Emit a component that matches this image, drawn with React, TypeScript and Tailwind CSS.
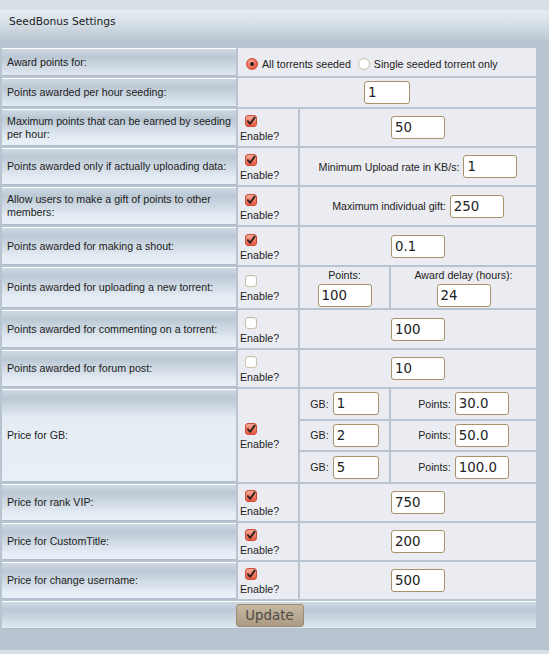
import React from "react";

const sans = "font-['Liberation_Sans',Arial,sans-serif]";
const dejavu = "font-['DejaVu_Sans',Verdana,sans-serif]";

const labelCls =
  "flex items-center pl-[5px] pr-[2px] border-t border-t-white border-b border-b-[#aebdcb] bg-[linear-gradient(to_bottom,#cfd9e3_0px,#bbc8d4_8px,#e4ecf4_28px,#e8eff7_100%)] text-[10.67px] leading-[13px] text-[#222]";

const cellCls = "bg-[#ebecf1]";

function Check({ checked }: { checked: boolean }) {
  if (checked) {
    return (
      <span className="ml-[5px] block w-[12px] h-[12px] rounded-[3px] border border-[#cc4d39] bg-[linear-gradient(to_bottom,#f8a897,#e9583f)] relative">
        <svg
          width="12"
          height="12"
          viewBox="0 0 12 12"
          className="absolute left-[-1px] top-[-1px]"
        >
          <path
            d="M2.8 6.2 L5.2 8.8 L9.6 2.6"
            fill="none"
            stroke="#2a2220"
            strokeWidth="1.9"
            strokeLinecap="round"
            strokeLinejoin="round"
          />
        </svg>
      </span>
    );
  }
  return (
    <span className="ml-[5px] block w-[12px] h-[12px] rounded-[3px] border border-[#c9bfaa] bg-white shadow-[inset_0_1px_1px_rgba(0,0,0,0.06)]" />
  );
}

function Radio({ checked }: { checked: boolean }) {
  if (checked) {
    return (
      <span className="inline-flex items-center justify-center w-[12px] h-[12px] rounded-full border border-[#cc4d39] bg-[radial-gradient(circle_at_40%_35%,#fbb3a3,#e9583f_70%)]">
        <span className="block w-[4px] h-[4px] rounded-full bg-[#2a2220]" />
      </span>
    );
  }
  return (
    <span className="inline-block w-[12px] h-[12px] rounded-full border border-[#c9bfaa] bg-white" />
  );
}

function Enable({ checked }: { checked: boolean }) {
  return (
    <div className={`${cellCls} flex flex-col justify-center pt-[2px] pl-[2px]`}>
      <Check checked={checked} />
      <span className={`${sans} mt-[3px] text-[10.67px] leading-[12px] text-[#222]`}>
        Enable?
      </span>
    </div>
  );
}

function Input({ value, w = 54 }: { value: string; w?: number }) {
  return (
    <input
      defaultValue={value}
      className={`${dejavu} ${
        w === 46 ? "w-[46px]" : "w-[54px]"
      } h-[23px] border border-[#a8916b] rounded-[3px] bg-white px-[3px] text-[13.33px] text-[#222] outline-none`}
    />
  );
}

function Center({ children }: { children: React.ReactNode }) {
  return (
    <div className={`${cellCls} flex items-center justify-center gap-[4px] ${sans} text-[10.67px] text-[#222]`}>
      {children}
    </div>
  );
}

export default function App() {
  return (
    <div className="min-h-[654px] bg-[#d8e0e7] pt-[10px]">
      <div className="h-[640px] bg-[#b8c5d1]">
        <div
          className={`${dejavu} h-[36px] bg-[linear-gradient(to_bottom,#e4ebf2_0px,#dbe3ea_10px,#b8c5d1_32px)] pl-[9px] pt-[5px] text-[10.67px] leading-[13px] text-[#222]`}
        >
          SeedBonus Settings
        </div>
        <div
          className={`${sans} grid w-[538px] grid-cols-[234px_60px_236px] grid-rows-[28px_29px_37px_37px_38px_38px_41px_38px_37px_93px_37px_37px_37px_28px] gap-[2px] p-[2px]`}
        >
          {/* Row 1 */}
          <div className={labelCls}>Award points for:</div>
          <div className={`${cellCls} col-span-2 flex items-center pl-[8px] pt-[3px] text-[10.67px] text-[#222]`}>
            <Radio checked />
            <span className="ml-[4px]">All torrents seeded</span>
            <span className="ml-[7px] flex">
              <Radio checked={false} />
            </span>
            <span className="ml-[4px]">Single seeded torrent only</span>
          </div>

          {/* Row 2 */}
          <div className={labelCls}>Points awarded per hour seeding:</div>
          <div className={`${cellCls} col-span-2 flex items-center justify-center`}>
            <Input value="1" w={46} />
          </div>

          {/* Row 3 */}
          <div className={labelCls}>
            <span>
              Maximum points that can be earned by seeding
              <br />
              per hour:
            </span>
          </div>
          <Enable checked />
          <Center>
            <Input value="50" />
          </Center>

          {/* Row 4 */}
          <div className={labelCls}>Points awarded only if actually uploading data:</div>
          <Enable checked />
          <Center>
            <span>Minimum Upload rate in KB/s:</span>
            <Input value="1" />
          </Center>

          {/* Row 5 */}
          <div className={labelCls}>
            <span>
              Allow users to make a gift of points to other
              <br />
              members:
            </span>
          </div>
          <Enable checked />
          <Center>
            <span>Maximum individual gift:</span>
            <Input value="250" />
          </Center>

          {/* Row 6 */}
          <div className={labelCls}>Points awarded for making a shout:</div>
          <Enable checked />
          <Center>
            <Input value="0.1" />
          </Center>

          {/* Row 7 */}
          <div className={labelCls}>Points awarded for uploading a new torrent:</div>
          <Enable checked={false} />
          <div className="grid grid-cols-[89px_1fr] gap-[2px]">
            <div className={`${cellCls} flex flex-col items-center justify-center text-[10.67px] leading-[13px] text-[#222]`}>
              <span>Points:</span>
              <span className="mt-[2px] flex">
                <Input value="100" />
              </span>
            </div>
            <div className={`${cellCls} flex flex-col items-center justify-center text-[10.67px] leading-[13px] text-[#222]`}>
              <span>Award delay (hours):</span>
              <span className="mt-[2px] flex">
                <Input value="24" />
              </span>
            </div>
          </div>

          {/* Row 8 */}
          <div className={labelCls}>Points awarded for commenting on a torrent:</div>
          <Enable checked={false} />
          <Center>
            <Input value="100" />
          </Center>

          {/* Row 9 */}
          <div className={labelCls}>Points awarded for forum post:</div>
          <Enable checked={false} />
          <Center>
            <Input value="10" />
          </Center>

          {/* Row 10 */}
          <div className={labelCls}>Price for GB:</div>
          <Enable checked />
          <div className="grid grid-cols-[89px_1fr] grid-rows-3 gap-[2px]">
            {[
              ["1", "30.0"],
              ["2", "50.0"],
              ["5", "100.0"],
            ].map(([gb, pts]) => (
              <React.Fragment key={gb}>
                <Center>
                  <span>GB:</span>
                  <Input value={gb} w={46} />
                </Center>
                <Center>
                  <span>Points:</span>
                  <Input value={pts} />
                </Center>
              </React.Fragment>
            ))}
          </div>

          {/* Row 11 */}
          <div className={labelCls}>Price for rank VIP:</div>
          <Enable checked />
          <Center>
            <Input value="750" />
          </Center>

          {/* Row 12 */}
          <div className={labelCls}>Price for CustomTitle:</div>
          <Enable checked />
          <Center>
            <Input value="200" />
          </Center>

          {/* Row 13 */}
          <div className={labelCls}>Price for change username:</div>
          <Enable checked />
          <Center>
            <Input value="500" />
          </Center>

          {/* Update */}
          <div className={`${labelCls} col-span-3 justify-center pl-0 pr-[4px]`}>
            <button
              className={`${dejavu} w-[68px] h-[23px] rounded-[3px] border border-[#9c8b72] bg-[linear-gradient(to_bottom,#c6b8a2,#ab9b83)] text-[13.33px] text-[#4e4a45]`}
            >
              Update
            </button>
          </div>
        </div>
      </div>
    </div>
  );
}
